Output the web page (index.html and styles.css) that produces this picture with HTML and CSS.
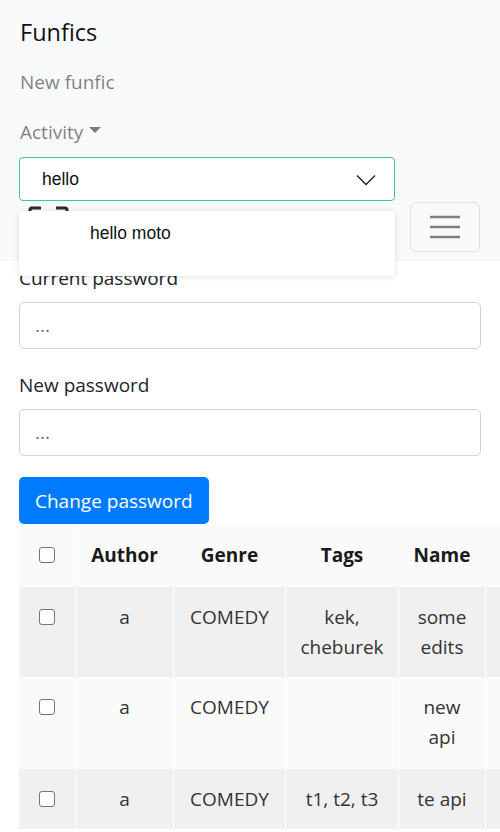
FILE: index.html
```html
<!DOCTYPE html>
<html lang="en">
<head>
<meta charset="utf-8">
<title>Funfics</title>
<link rel="stylesheet" href="styles.css">
</head>
<body>
<nav class="navbar">
  <div class="brand">Funfics</div>
  <ul class="nav">
    <li class="nav-link">New funfic</li>
    <li class="nav-link">Activity <span class="caret"></span></li>
  </ul>
  <div class="select">
    <span class="select-value">hello</span>
    <svg class="chevron" width="20" height="12" viewBox="0 0 20 12"><path d="M1 1.5 L10 10.5 L19 1.5" fill="none" stroke="#222" stroke-width="1.4"/></svg>
  </div>
  <div class="tool-row">
    <svg class="scan-icon" width="42" height="20" viewBox="0 0 42 20"><path d="M2 19 V4 Q2 2 4 2 H13" fill="none" stroke="#2a2a2a" stroke-width="3"/><path d="M28 2 H37 Q39 2 39 4 V19" fill="none" stroke="#2a2a2a" stroke-width="3"/></svg>
    <button class="toggler" type="button" aria-label="Toggle navigation">
      <svg width="30" height="24" viewBox="0 0 30 24"><path d="M0 4H30M0 14H30M0 24H30" stroke="#7f7f7f" stroke-width="2.4" fill="none" transform="translate(0,-2)"/></svg>
    </button>
    <div class="menu">
      <div class="menu-item">hello moto</div>
    </div>
  </div>
</nav>
<main class="content">
  <div class="form-group">
    <label class="label">Current password</label>
    <div class="input">...</div>
  </div>
  <div class="form-group">
    <label class="label">New password</label>
    <div class="input">...</div>
  </div>
  <button class="btn" type="button">Change password</button>
  <div class="table-wrap">
    <table class="table">
      <colgroup>
        <col class="c1"><col class="c2"><col class="c3"><col class="c4"><col class="c5"><col class="c6">
      </colgroup>
      <thead>
        <tr>
          <th><span class="check"></span></th>
          <th>Author</th>
          <th>Genre</th>
          <th>Tags</th>
          <th>Name</th>
          <th></th>
        </tr>
      </thead>
      <tbody>
        <tr class="odd">
          <td><span class="check"></span></td>
          <td>a</td>
          <td>COMEDY</td>
          <td>kek,<br>cheburek</td>
          <td>some<br>edits</td>
          <td></td>
        </tr>
        <tr class="even">
          <td><span class="check"></span></td>
          <td>a</td>
          <td>COMEDY</td>
          <td></td>
          <td>new<br>api</td>
          <td></td>
        </tr>
        <tr class="odd">
          <td><span class="check"></span></td>
          <td>a</td>
          <td>COMEDY</td>
          <td>t1, t2, t3</td>
          <td>te api</td>
          <td></td>
        </tr>
      </tbody>
    </table>
  </div>
</main>
</body>
</html>
```
FILE: styles.css
```css
* { box-sizing: border-box; }
html, body { margin: 0; padding: 0; }
body {
  font-family: "Open Sans", "Noto Sans", sans-serif;
  font-size: 19px;
  line-height: 30px;
  color: #212529;
  background: #fff;
  width: 500px;
  overflow: hidden;
}
.navbar {
  background: #f8f9fa;
  padding: 8px 20px 9px 19px;
}
.brand {
  font-size: 23.5px;
  line-height: 37px;
  padding: 6px 0 6px 1px;
  color: #111;
}
.nav { list-style: none; margin: 0; padding: 0; }
.nav-link {
  padding: 10px 0 10px 1px;
  color: rgba(0,0,0,0.5);
  line-height: 30px;
  display: flex;
  align-items: center;
  gap: 6px;
}
.caret {
  display: inline-block;
  width: 0; height: 0;
  border-left: 6px solid transparent;
  border-right: 6px solid transparent;
  border-top: 6px solid rgba(0,0,0,0.5);
  margin-top: -4px;
}
.select {
  width: 376px;
  height: 44px;
  border: 1px solid #3ccb85;
  border-radius: 4px;
  background: #fff;
  display: flex;
  align-items: center;
  justify-content: space-between;
  padding: 0 18px 0 22px;
  font-family: "Liberation Sans", Arial, sans-serif;
  font-size: 17.5px;
  color: #111;
}
.chevron { margin-top: 1px; }
.tool-row {
  position: relative;
  display: flex;
  justify-content: space-between;
  align-items: flex-start;
  padding-top: 1px;
}
.scan-icon { margin: 4px 0 0 9px; }
.toggler {
  width: 70px;
  height: 50px;
  border: 1px solid rgba(0,0,0,0.1);
  border-radius: 6px;
  background: transparent;
  display: flex;
  align-items: center;
  justify-content: center;
  padding: 0;
}
.menu {
  position: absolute;
  left: 0;
  top: 10px;
  width: 376px;
  height: 65px;
  background: #fff;
  border-radius: 4px;
  box-shadow: 0 1px 6px rgba(0,0,0,0.12);
  padding: 10px 0 0 71px;
  font-family: "Liberation Sans", Arial, sans-serif;
  font-size: 17.5px;
  line-height: 24px;
  color: #111;
  z-index: 2;
}
.content {
  padding: 2px 0 0 19px;
}
.form-group { width: 462px; margin-bottom: 21px; }
.label { display: block; line-height: 30px; margin-bottom: 9px; color: #212529; }
.input {
  height: 47px;
  border: 1px solid #ced4da;
  border-radius: 5px;
  padding: 7px 15px;
  color: #6c757d;
  line-height: 30px;
  background: #fff;
}
.btn {
  display: block;
  height: 47px;
  padding: 0 16px;
  background: #007bff;
  color: #fff;
  border: 0;
  border-radius: 5px;
  font-family: inherit;
  font-size: 19px;
  line-height: 30px;
}
.table-wrap { width: 481px; overflow: hidden; }
.table {
  table-layout: fixed;
  width: 617px;
  border-collapse: separate;
  border-spacing: 0;
}
.c1 { width: 57px; }
.c2 { width: 98px; }
.c3 { width: 112px; }
.c4 { width: 113px; }
.c5 { width: 87px; }
.c6 { width: 150px; }
.table th, .table td {
  text-align: center;
  vertical-align: top;
  border-right: 1px solid #fff;
  white-space: nowrap;
  overflow: hidden;
  padding: 15px 0;
  line-height: 30px;
}
.table th {
  background: #fafafa;
  font-weight: 700;
  color: #1a1a1a;
  padding: 16px 0 17px;
  border-right-color: #fcfcfc;
}
.table td { color: #333; }
.odd td { background: #f0f0f0; }
.even td { background: #fafafa; }
.even td { padding-bottom: 17px; }
.check {
  display: inline-block;
  width: 16px;
  height: 16px;
  border: 1px solid #767676;
  border-radius: 3px;
  background: #fff;
  vertical-align: middle;
  margin-top: -4px;
}
```
